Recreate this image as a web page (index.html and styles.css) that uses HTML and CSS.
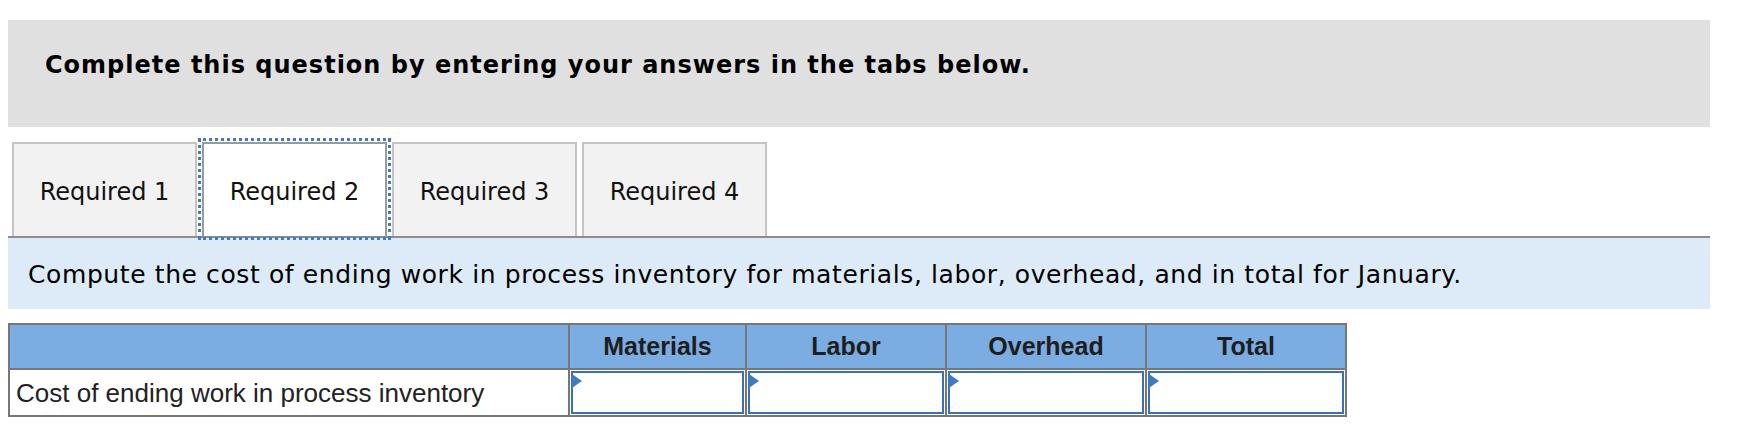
FILE: index.html
```html
<!DOCTYPE html>
<html lang="en">
<head>
<meta charset="utf-8">
<title>Question</title>
<link rel="stylesheet" href="styles.css">
</head>
<body>
<div class="page">
  <div class="prompt">Complete this question by entering your answers in the tabs below.</div>
  <div class="tabs">
    <div class="tab">Required 1</div>
    <div class="tab active">Required 2</div>
    <div class="tab">Required 3</div>
    <div class="tab">Required 4</div>
  </div>
  <div class="instruction">Compute the cost of ending work in process inventory for materials, labor, overhead, and in total for January.</div>
  <table class="grid">
    <colgroup>
      <col class="c-label">
      <col class="c-mat">
      <col class="c-num">
      <col class="c-num">
      <col class="c-num">
    </colgroup>
    <thead>
      <tr>
        <th></th>
        <th>Materials</th>
        <th>Labor</th>
        <th>Overhead</th>
        <th>Total</th>
      </tr>
    </thead>
    <tbody>
      <tr>
        <td class="label">Cost of ending work in process inventory</td>
        <td class="entry"><div class="box"><span class="flag"></span></div></td>
        <td class="entry"><div class="box"><span class="flag"></span></div></td>
        <td class="entry"><div class="box"><span class="flag"></span></div></td>
        <td class="entry"><div class="box"><span class="flag"></span></div></td>
      </tr>
    </tbody>
  </table>
</div>
</body>
</html>
```
FILE: styles.css
```css
html, body {
  margin: 0;
  padding: 0;
  background: #ffffff;
}

.page {
  width: 1702px;
  margin-left: 8px;
  padding-top: 20px;
}

.prompt {
  box-sizing: border-box;
  height: 107px;
  padding: 31px 0 0 37px;
  background: #e0e0e0;
  font-family: "DejaVu Sans", Verdana, sans-serif;
  font-weight: bold;
  font-size: 24px;
  letter-spacing: 1px;
  line-height: 28px;
  color: #000;
}

.tabs {
  display: flex;
  margin-top: 15px;
  padding-left: 4px;
  border-bottom: 2px solid #8c8c8c;
}

.tab {
  box-sizing: border-box;
  width: 185px;
  height: 94px;
  margin-right: 5px;
  padding-top: 4px;
  display: flex;
  align-items: center;
  justify-content: center;
  background: #f2f2f2;
  border: 2px solid #c4c4c4;
  border-bottom: 0;
  font-family: "DejaVu Sans", Verdana, sans-serif;
  font-size: 24px;
  color: #111;
}

.tab.active {
  background: #ffffff;
  border-color: #9a9a9a;
  outline: 3px dotted #3f7ac3;
  outline-offset: 1px;
}

.instruction {
  box-sizing: border-box;
  height: 71px;
  padding-left: 20px;
  padding-top: 2px;
  display: flex;
  align-items: center;
  background: #dcebf7;
  font-family: "DejaVu Sans", Verdana, sans-serif;
  font-size: 25px;
  letter-spacing: 0.6px;
  color: #000;
}

.grid {
  margin-top: 14px;
  border-collapse: collapse;
  border: 2px solid #777777;
  font-family: "Liberation Sans", Arial, sans-serif;
}

.c-label { width: 560px; }
.c-mat { width: 177px; }
.c-num { width: 200px; }

.grid th {
  height: 43px;
  padding: 0;
  border: 2px solid #777777;
  background: #7badE2;
  font-size: 25px;
  font-weight: bold;
  color: #1e1e1e;
  text-align: center;
}

.grid td {
  padding: 0;
  border: 2px solid #777777;
  background: #ffffff;
}

.grid td.label {
  padding-left: 6px;
  padding-top: 2px;
  font-size: 26px;
  color: #222;
  text-align: left;
}

.grid td.entry {
  padding: 1px;
}

.box {
  position: relative;
  box-sizing: border-box;
  height: 43px;
  border: 2px solid #3a71b6;
  background: #fff;
}

.flag {
  position: absolute;
  left: -1px;
  top: 1px;
  width: 0;
  height: 0;
  border-top: 7px solid transparent;
  border-bottom: 7px solid transparent;
  border-left: 10px solid #3f7bc4;
}
```
